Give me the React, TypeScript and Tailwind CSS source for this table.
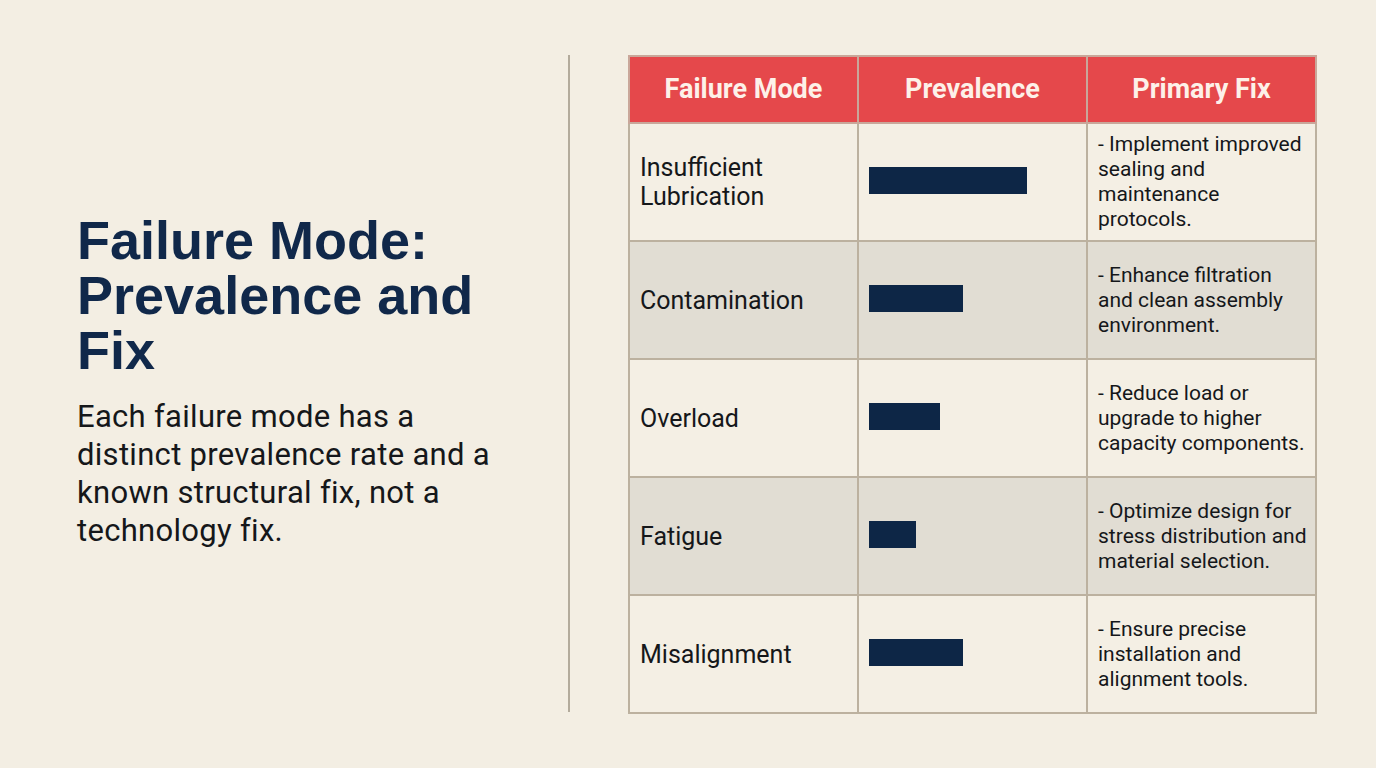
import React from "react";

const rows = [
  { mode: ["Insufficient", "Lubrication"], w: 158, fix: "- Implement improved sealing and maintenance protocols.", shade: false },
  { mode: ["Contamination"], w: 94, fix: "- Enhance filtration and clean assembly environment.", shade: true },
  { mode: ["Overload"], w: 71, fix: "- Reduce load or upgrade to higher capacity components.", shade: false },
  { mode: ["Fatigue"], w: 47, fix: "- Optimize design for stress distribution and material selection.", shade: true },
  { mode: ["Misalignment"], w: 94, fix: "- Ensure precise installation and alignment tools.", shade: false },
];

export default function App() {
  return (
    <div
      className="w-[1376px] h-[768px] bg-[#f3eee3] flex overflow-hidden"
      style={{ fontFamily: "Roboto, 'Liberation Sans', sans-serif" }}
    >
      <div className="w-[568px] flex flex-col justify-center pl-[77px] pb-[6px]">
        <h1
          className="w-[440px] text-[54px] leading-[55px] font-bold text-[#10284a]"
          style={{ fontFamily: "'Liberation Sans', Arial, sans-serif" }}
        >
          Failure Mode: Prevalence and Fix
        </h1>
        <p className="w-[425px] mt-[20px] text-[31px] leading-[38px] tracking-[0.3px] text-[#15171a]">
          Each failure mode has a distinct prevalence rate and a known structural fix, not a technology fix.
        </p>
      </div>
      <div className="pt-[55px] pb-[56px] flex">
        <div className="w-[2px] bg-[#b3ab9c]" />
      </div>
      <div className="pl-[58px] pt-[55px]">
        <table className="border-collapse border-2 border-[#bcb19f]" style={{ tableLayout: "fixed" }}>
          <thead>
            <tr className="h-[67px] bg-[#e5484b]">
              {["Failure Mode", "Prevalence", "Primary Fix"].map((h) => (
                <th
                  key={h}
                  className="w-[229px] border-2 border-[#c9a79a] text-[27px] font-bold text-[#fdf1e9] text-center"
                >
                  {h}
                </th>
              ))}
            </tr>
          </thead>
          <tbody>
            {rows.map((r, i) => (
              <tr key={i} className={`h-[118px] ${r.shade ? "bg-[#e1ddd3]" : "bg-[#f4efe4]"}`}>
                <td className="border-2 border-[#bcb19f] px-[10px] text-[25px] leading-[29px] text-[#15171a]">
                  {r.mode.map((m) => (
                    <div key={m}>{m}</div>
                  ))}
                </td>
                <td className="border-2 border-[#bcb19f] px-[10px]">
                  <div className="h-[27px] mb-[4px] bg-[#0d2646]" style={{ width: r.w }} />
                </td>
                <td className="border-2 border-[#bcb19f] pl-[10px] pr-[6px] text-[21px] leading-[25px] text-[#15171a]">
                  {r.fix}
                </td>
              </tr>
            ))}
          </tbody>
        </table>
      </div>
    </div>
  );
}
